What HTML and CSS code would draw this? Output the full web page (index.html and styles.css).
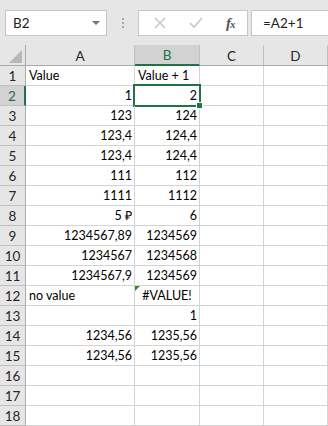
FILE: index.html
```html
<!DOCTYPE html>
<html>
<head>
<meta charset="utf-8">
<link rel="stylesheet" href="styles.css">
</head>
<body>
<div class="toolbar">
  <div class="namebox"><span>B2</span><svg class="dd" width="8" height="4" viewBox="0 0 8 4"><path d="M0 0H8L4 4Z" fill="#777"/></svg></div>
  <div class="grip"><i></i><i></i><i></i></div>
  <div class="fbtns">
    <svg class="ic" width="12" height="12" viewBox="0 0 12 12"><path d="M1 1L11 11M11 1L1 11" stroke="#c6c6c6" stroke-width="1.5" fill="none"/></svg>
    <svg class="ic" width="14" height="12" viewBox="0 0 14 12"><path d="M1 6L5 10L13 1" stroke="#c6c6c6" stroke-width="1.6" fill="none"/></svg>
    <span class="fx">f<span class="x">x</span></span>
  </div>
  <div class="finput">=A2+1</div>
</div>
<div class="sheet">
  <div class="corner"><svg width="13" height="13" viewBox="0 0 13 13"><path d="M13 0V13H0Z" fill="#b8b8b8"/></svg></div>
  <div class="ch">A</div><div class="ch sel">B</div><div class="ch">C</div><div class="ch">D</div>

  <div class="rh">1</div><div class="c">Value</div><div class="c">Value + 1</div><div class="c"></div><div class="c"></div>
  <div class="rh sel">2</div><div class="c r">1</div><div class="c r active">2</div><div class="c"></div><div class="c"></div>
  <div class="rh">3</div><div class="c r">123</div><div class="c r">124</div><div class="c"></div><div class="c"></div>
  <div class="rh">4</div><div class="c r">123,4</div><div class="c r">124,4</div><div class="c"></div><div class="c"></div>
  <div class="rh">5</div><div class="c r">123,4</div><div class="c r">124,4</div><div class="c"></div><div class="c"></div>
  <div class="rh">6</div><div class="c r">111</div><div class="c r">112</div><div class="c"></div><div class="c"></div>
  <div class="rh">7</div><div class="c r">1111</div><div class="c r">1112</div><div class="c"></div><div class="c"></div>
  <div class="rh">8</div><div class="c r">5 ₽</div><div class="c r">6</div><div class="c"></div><div class="c"></div>
  <div class="rh">9</div><div class="c r">1234567,89</div><div class="c r">1234569</div><div class="c"></div><div class="c"></div>
  <div class="rh">10</div><div class="c r">1234567</div><div class="c r">1234568</div><div class="c"></div><div class="c"></div>
  <div class="rh">11</div><div class="c r">1234567,9</div><div class="c r">1234569</div><div class="c"></div><div class="c"></div>
  <div class="rh">12</div><div class="c">no value</div><div class="c ctr err">#VALUE!</div><div class="c"></div><div class="c"></div>
  <div class="rh">13</div><div class="c"></div><div class="c r">1</div><div class="c"></div><div class="c"></div>
  <div class="rh">14</div><div class="c r">1234,56</div><div class="c r">1235,56</div><div class="c"></div><div class="c"></div>
  <div class="rh">15</div><div class="c r">1234,56</div><div class="c r">1235,56</div><div class="c"></div><div class="c"></div>
  <div class="rh">16</div><div class="c"></div><div class="c"></div><div class="c"></div><div class="c"></div>
  <div class="rh">17</div><div class="c"></div><div class="c"></div><div class="c"></div><div class="c"></div>
  <div class="rh">18</div><div class="c"></div><div class="c"></div><div class="c"></div><div class="c"></div>
</div>
</body>
</html>
```

FILE: styles.css
```css
html, body {
  margin: 0;
  padding: 0;
  background: #e6e6e6;
  font-family: Lato, "Open Sans", sans-serif;
  font-size: 12.5px;
  color: #000;
  overflow: hidden;
}
.toolbar {
  height: 45px;
  display: flex;
  align-items: flex-start;
  padding-top: 10px;
  box-sizing: border-box;
  background: #e6e6e6;
}
.namebox {
  margin-left: 5px;
  width: 102px;
  height: 26px;
  box-sizing: border-box;
  background: #fff;
  border: 1px solid #c6c6c6;
  display: flex;
  align-items: center;
  justify-content: space-between;
  padding: 0 6px 0 7px;
  font-size: 13.5px;
  color: #222;
}
.grip {
  width: 31px;
  height: 26px;
  display: flex;
  flex-direction: column;
  align-items: center;
  justify-content: center;
  gap: 2px;
}
.grip i {
  display: block;
  width: 2px;
  height: 2px;
  background: #a8a8a8;
}
.fbtns {
  width: 110px;
  height: 26px;
  box-sizing: border-box;
  background: #fff;
  border: 1px solid #c6c6c6;
  display: flex;
  align-items: center;
  padding-left: 15px;
  gap: 23px;
}
.fx {
  font-family: "Liberation Serif", serif;
  font-style: italic;
  font-weight: bold;
  font-size: 15px;
  color: #555;
  letter-spacing: -1px;
}
.fx .x {
  font-size: 11px;
}
.finput {
  margin-left: 3px;
  flex: 1;
  height: 26px;
  box-sizing: border-box;
  background: #fff;
  border: 1px solid #c6c6c6;
  border-right: none;
  display: flex;
  align-items: center;
  padding-left: 11px;
  font-size: 13.5px;
  color: #222;
}
.sheet {
  display: grid;
  grid-template-columns: 26px 109px 65px 64px 64px;
  grid-template-rows: 21px repeat(18, 20px);
  background: #fff;
}
.sheet > div {
  box-sizing: border-box;
  border-right: 1px solid #d4d4d4;
  border-bottom: 1px solid #d4d4d4;
  display: flex;
  align-items: center;
  white-space: nowrap;
  overflow: visible;
  position: relative;
}
.corner {
  background: #e6e6e6;
  border-right: 1px solid #ababab !important;
  border-bottom: 1px solid #ababab !important;
  justify-content: flex-end;
  align-items: flex-end !important;
  padding: 0 3px 2px 0;
}
.corner svg { display: block; }
.ch {
  background: #e6e6e6;
  justify-content: center;
  color: #262626;
  border-right: 1px solid #c0c0c0 !important;
  border-bottom: 1px solid #ababab !important;
  font-size: 13.5px;
  padding-top: 1px;
}
.ch.sel {
  background: #d2d2d2;
  color: #217346;
  border-bottom: 2px solid #217346 !important;
}
.rh {
  background: #e6e6e6;
  justify-content: center;
  color: #262626;
  border-right: 1px solid #ababab !important;
  border-bottom: 1px solid #c0c0c0 !important;
  font-size: 13.5px;
}
.rh.sel {
  background: #d2d2d2;
  color: #217346;
  border-right: 2px solid #217346 !important;
}
.c {
  padding: 0 3px 0 3px;
}
.c.r {
  justify-content: flex-end;
  padding-right: 2px;
}
.c.ctr {
  justify-content: center;
}
.active::before {
  content: "";
  position: absolute;
  left: -2px;
  top: -2px;
  right: -2px;
  bottom: -2px;
  border: 2px solid #217346;
  pointer-events: none;
}
.active::after {
  content: "";
  position: absolute;
  right: -4px;
  bottom: -4px;
  width: 5px;
  height: 5px;
  background: #217346;
  border: 1px solid #fff;
  z-index: 2;
}
.err::before {
  content: "";
  position: absolute;
  left: 0;
  top: 0;
  border-top: 5px solid #2f8a3c;
  border-right: 5px solid transparent;
}
```
